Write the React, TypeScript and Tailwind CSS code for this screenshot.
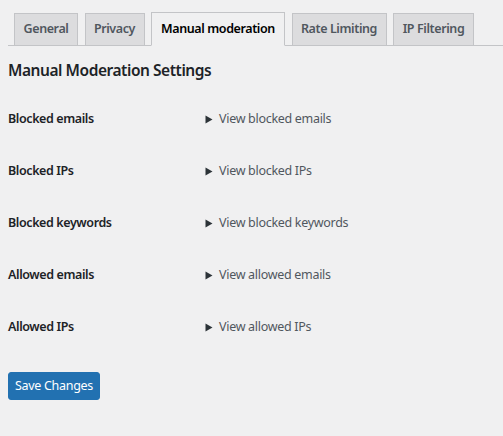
import React from "react";

const tabs = [
  { label: "General", w: "w-[64px]" },
  { label: "Privacy", w: "w-[60px]" },
  { label: "Manual moderation", w: "w-[134px]", active: true },
  { label: "Rate Limiting", w: "w-[95px]" },
  { label: "IP Filtering", w: "w-[81px]" },
];

const rows = [
  ["Blocked emails", "View blocked emails"],
  ["Blocked IPs", "View blocked IPs"],
  ["Blocked keywords", "View blocked keywords"],
  ["Allowed emails", "View allowed emails"],
  ["Allowed IPs", "View allowed IPs"],
];

export default function App() {
  return (
    <div
      className="w-[503px] h-[436px] bg-[#f0f0f1] overflow-hidden pl-[8px] pt-[13px]"
      style={{ fontFamily: '"Noto Sans", "Open Sans", sans-serif' }}
    >
      <div className="flex border-b border-[#c3c4c7] h-[33px] items-end">
        {tabs.map((t, i) => (
          <div
            key={t.label}
            className={`${t.w} ${i === 0 ? "ml-[6px]" : "ml-[6.5px]"} shrink-0 flex items-center justify-center border border-[#c3c4c7] text-[12.5px] font-semibold tracking-[-0.4px] ${
              t.active
                ? "bg-[#f0f0f1] text-black border-b-[#f0f0f1] mb-[-1px] h-[34px]"
                : "bg-[#dcdcde] text-[#50575e] border-b-0 h-[32px]"
            }`}
          >
            {t.label}
          </div>
        ))}
      </div>
      <h2 className="mt-[12px] h-[24px] leading-[24px] text-[15.5px] font-semibold text-[#1d2327] tracking-[-0.45px]">
        Manual Moderation Settings
      </h2>
      <div className="mt-[11px]">
        {rows.map(([label, link]) => (
          <div key={label} className="flex items-center h-[52px]">
            <div className="w-[198px] text-[12.5px] font-semibold text-[#1d2327] tracking-[-0.4px]">
              {label}
            </div>
            <div className="flex items-center text-[12.5px] text-[#50575e] tracking-[-0.3px]">
              <svg width="8" height="9" viewBox="0 0 8 9" className="mr-[6px] ml-[-1px]">
                <path d="M0.5 0.5 L7.5 4.5 L0.5 8.5 Z" fill="#2c3338" />
              </svg>
              {link}
            </div>
          </div>
        ))}
      </div>
      <button className="mt-[19px] h-[28px] w-[92px] rounded-[3px] bg-[#2271b1] border border-[#2271b1] text-white text-[12.5px] tracking-[-0.3px] flex items-center justify-center">
        Save Changes
      </button>
    </div>
  );
}
